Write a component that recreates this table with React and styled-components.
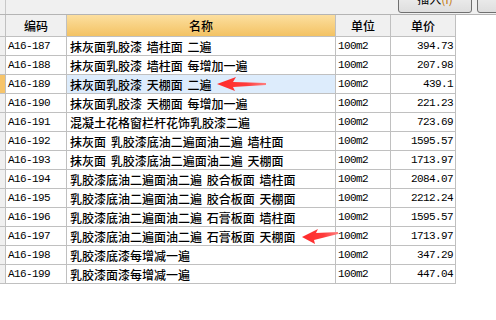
import React from 'react'
import styled, { createGlobalStyle } from 'styled-components'

const GlobalStyle = createGlobalStyle`
  html, body {
    margin: 0;
    padding: 0;
    background: #ffffff;
  }
  body {
    width: 496px;
    height: 320px;
    overflow: hidden;
    font-family: "Noto Sans CJK SC", sans-serif;
  }
`

const Page = styled.div`
  position: relative;
  width: 496px;
  height: 320px;
  overflow: hidden;
  background: #ffffff;
`

const Toolbar = styled.div`
  display: flex;
  align-items: flex-end;
  height: 14px;
  overflow: hidden;
  background: #f0f0f0;
  border-bottom: 1px solid #b4b4b4;
`

const ToolbarGutter = styled.div`
  flex: 0 0 5px;
  align-self: stretch;
  border-right: 1px solid #c8c8c8;
`

const ButtonGroup = styled.div`
  display: flex;
  gap: 5px;
  margin-left: 392px;
  margin-bottom: 1px;
`

const ToolButton = styled.div`
  flex: 0 0 auto;
  width: 72px;
  height: 19px;
  display: flex;
  align-items: center;
  justify-content: center;
  border: 1px solid #707070;
  border-radius: 3px;
  background: linear-gradient(#f4f4f4, #dedede);
  font-size: 12px;
  line-height: 12px;
  color: #000;
  padding-bottom: 4px;
  box-sizing: content-box;
`

const Mnemonic = styled.span`
  color: #c47a12;
`

const Grid = styled.div`
  display: grid;
  grid-template-columns: 5px 60px 268px 54px 64px;
  grid-auto-rows: 18px;
  grid-template-rows: 21px;
  gap: 1px;
  width: 455px;
  padding: 0 1px 1px 0;
  background: #c0c0c0;
`

const HeadCell = styled.div`
  display: flex;
  align-items: center;
  justify-content: center;
  font-size: 12px;
  font-weight: 500;
  color: #000;
  background: ${p => (p.$active ? 'linear-gradient(#fcdf9f, #f3c263)' : '#f0f0f0')};
`

const GutterCell = styled.div`
  background: ${p => (p.$active ? '#f6c46a' : '#f0f0f0')};
`

const Cell = styled.div`
  display: flex;
  align-items: center;
  overflow: hidden;
  white-space: pre;
  background: ${p => (p.$selected ? '#ddecfc' : '#ffffff')};
  color: #000;
  justify-content: ${p => (p.$right ? 'flex-end' : 'flex-start')};
  padding: ${p => (p.$right ? '0 2px 0 0' : '0 0 0 2px')};
`

const CodeCell = styled(Cell)`
  font-family: "Liberation Mono", monospace;
  font-size: 11px;
  letter-spacing: -0.6px;
`

const NameCell = styled(Cell)`
  font-size: 12px;
  font-weight: 500;
  padding-left: 3px;
  word-spacing: 2px;
`

const Arrow = styled.svg`
  position: absolute;
  left: ${p => p.$x}px;
  top: ${p => p.$y}px;
  overflow: visible;
`

const rows = [
  ['A16-187', '抹灰面乳胶漆 墙柱面 二遍', '100m2', '394.73'],
  ['A16-188', '抹灰面乳胶漆 墙柱面 每增加一遍', '100m2', '207.98'],
  ['A16-189', '抹灰面乳胶漆 天棚面 二遍', '100m2', '439.1'],
  ['A16-190', '抹灰面乳胶漆 天棚面 每增加一遍', '100m2', '221.23'],
  ['A16-191', '混凝土花格窗栏杆花饰乳胶漆二遍', '100m2', '723.69'],
  ['A16-192', '抹灰面 乳胶漆底油二遍面油二遍 墙柱面', '100m2', '1595.57'],
  ['A16-193', '抹灰面 乳胶漆底油二遍面油二遍 天棚面', '100m2', '1713.97'],
  ['A16-194', '乳胶漆底油二遍面油二遍 胶合板面 墙柱面', '100m2', '2084.07'],
  ['A16-195', '乳胶漆底油二遍面油二遍 胶合板面 天棚面', '100m2', '2212.24'],
  ['A16-196', '乳胶漆底油二遍面油二遍 石膏板面 墙柱面', '100m2', '1595.57'],
  ['A16-197', '乳胶漆底油二遍面油二遍 石膏板面 天棚面', '100m2', '1713.97'],
  ['A16-198', '乳胶漆底漆每增减一遍', '100m2', '347.29'],
  ['A16-199', '乳胶漆面漆每增减一遍', '100m2', '447.04'],
]

const selectedRow = 2

const RedArrow = ({ x, y, points }) => (
  <Arrow $x={x} $y={y} width="60" height="20">
    <defs>
      <linearGradient id={`g${x}`} x1="0" x2="1" y1="0" y2="0">
        <stop offset="0" stopColor="#ff2a2a" />
        <stop offset="0.6" stopColor="#ff3b3b" />
        <stop offset="1" stopColor="#ff8080" />
      </linearGradient>
    </defs>
    <polygon points={points} fill={`url(#g${x})`} />
  </Arrow>
)

export default function App() {
  return (
    <Page>
      <GlobalStyle />
      <Toolbar>
        <ToolbarGutter />
        <ButtonGroup>
          <ToolButton>插入<Mnemonic>(I)</Mnemonic></ToolButton>
          <ToolButton>省略</ToolButton>
        </ButtonGroup>
      </Toolbar>
      <Grid>
        <GutterCell />
        <HeadCell>编码</HeadCell>
        <HeadCell $active>名称</HeadCell>
        <HeadCell>单位</HeadCell>
        <HeadCell>单价</HeadCell>
        {rows.map(([code, name, unit, price], i) => (
          <React.Fragment key={code}>
            <GutterCell $active={i === selectedRow} />
            <CodeCell>{code}</CodeCell>
            <NameCell $selected={i === selectedRow}>{name}</NameCell>
            <CodeCell>{unit}</CodeCell>
            <CodeCell $right>{price}</CodeCell>
          </React.Fragment>
        ))}
      </Grid>
      <RedArrow x={216} y={77} points="1,7 20,0 17,5 50,6 50,8 17,10 19,14" />
      <RedArrow x={302} y={229} points="0,8 16,0 14,4 36,3 36,5 12,11 13,15" />
    </Page>
  )
}
